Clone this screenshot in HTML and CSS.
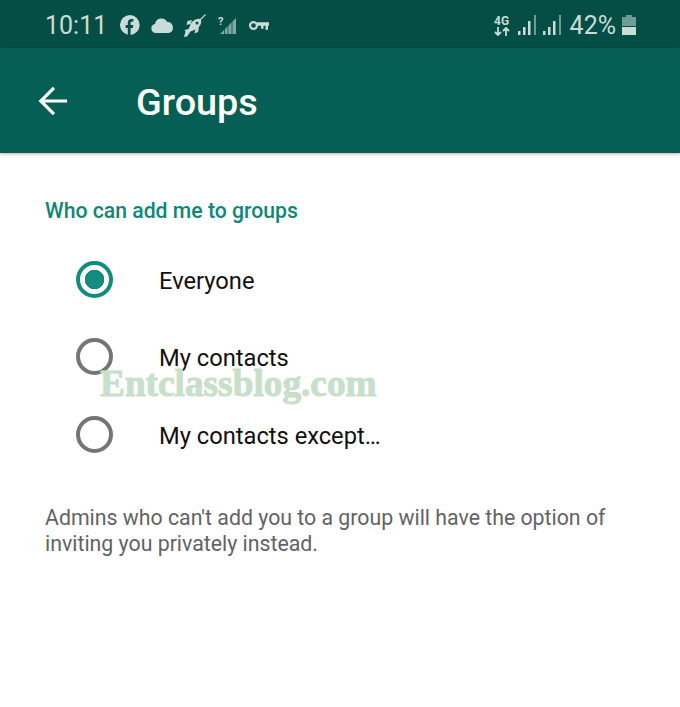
FILE: index.html
```html
<!DOCTYPE html>
<html lang="en">
<head>
<meta charset="utf-8">
<title>Groups</title>
<link rel="stylesheet" href="styles.css">
</head>
<body>
<header class="status">
  <div class="status-left">
    <span class="time">10:11</span>
    <svg class="ic ic-fb" viewBox="0 0 20 20"><path fill="#c9dcd8" fill-rule="evenodd" d="M10 0a10 10 0 0 0-2.200 19.750V13H5.600v-3h2.200V8c0-2.700 1.500-4 3.700-4 .9 0 1.900.1 1.900.1v2.500h-1.200c-1.200 0-1.600.8-1.600 1.500V10h2.700l-.45 3H10.600v6.950A10 10 0 0 0 10 0z"/></svg>
    <svg class="ic ic-cloud" viewBox="0 0 23 15"><path fill="#c9dcd8" d="M4.800 15a4.600 4.600 0 0 1-.8-9.100A6.600 6.600 0 0 1 16.300 4 5.600 5.600 0 0 1 17.800 15z"/></svg>
    <svg class="ic ic-rocket" viewBox="0 0 23 23"><ellipse cx="12.500" cy="10.500" rx="7" ry="4.200" transform="rotate(-45 12.500 10.500)" fill="#c9dcd8"/><path fill="#c9dcd8" d="M9 6 4.500 7 3.500 11 7.500 10zM16 13l-1 5-3.500 1.500 .8-4zM7 12l4 4-3.500 1.500L4 22.500 1 23l1.500-5.500L1.500 16 5.500 15z"/><path stroke="#c9dcd8" stroke-width="1.100" d="M16.500 6.500 22.500 .5"/><circle cx="14" cy="9" r="1.500" fill="#054e45"/></svg>
    <svg class="ic ic-nosig" viewBox="0 0 18 20"><path fill="#7fa8a1" d="M2 19 18 3v16z"/><path stroke="#054e45" stroke-width=".8" d="M6.500 19v-6M10 19v-10M14 19v-14"/><text class="q" x="0" y="10">?</text></svg>
    <svg class="ic ic-key" viewBox="0 0 20 11"><circle cx="4.500" cy="5.500" r="3.400" fill="none" stroke="#c9dcd8" stroke-width="2.200"/><path fill="#c9dcd8" d="M8 2.300h12v3.400h-1v4h-2.500v-4h-2v3H12v-3H8z"/></svg>
  </div>
  <div class="status-right">
    <div class="net">
      <span class="net-label">4G</span>
      <svg class="ic-arrows" viewBox="0 0 16 9"><path fill="none" stroke="#c9dcd8" stroke-width="1.800" d="M4 0v8M1 5l3 3 3-3M12 9V1M9 4l3-3 3 3"/></svg>
    </div>
    <svg class="ic ic-bars" viewBox="0 0 19 20"><path fill="#c9dcd8" d="M0 16h2.500v4H0zM5 12h2.500v8H5zM10 6h2.500v14H10z"/><path fill="#6f9c95" d="M16 0h2v20h-2z"/></svg>
    <svg class="ic ic-bars" viewBox="0 0 19 20"><path fill="#c9dcd8" d="M0 16h2.500v4H0zM5 12h2.500v8H5zM10 6h2.500v14H10z"/><path fill="#6f9c95" d="M16 0h2v20h-2z"/></svg>
    <span class="pct">42%</span>
    <svg class="ic ic-batt" viewBox="0 0 14 20"><path fill="#6f9c95" d="M4 0h6v2h4v9H0V2h4z"/><path fill="#c9dcd8" d="M0 12h14v8H0z"/></svg>
  </div>
</header>
<div class="appbar">
  <svg class="back" viewBox="0 0 32 32"><path fill="none" stroke="#fff" stroke-width="3.400" d="M31 16H4M17 2 3 16l14 14"/></svg>
  <h1 class="title">Groups</h1>
</div>
<main class="content">
  <h2 class="section">Who can add me to groups</h2>
  <ul class="options">
    <li class="option"><span class="radio radio-on"></span><span class="label">Everyone</span></li>
    <li class="option"><span class="radio"></span><span class="label">My contacts</span></li>
    <li class="option"><span class="radio"></span><span class="label">My contacts except…</span></li>
  </ul>
  <p class="note">Admins who can't add you to a group will have the option of inviting you privately instead.</p>
</main>
<div class="watermark">Entclassblog.com</div>
</body>
</html>
```
FILE: styles.css
```css
* { box-sizing: border-box; }
html, body { margin: 0; padding: 0; }
body { width: 680px; height: 707px; background: #fff; font-family: Roboto, "Liberation Sans", sans-serif; overflow: hidden; position: relative; }
.status { height: 48px; background: #054e45; display: flex; justify-content: space-between; align-items: center; padding: 2px 44px 0 45px; color: #c9dcd8; }
.status-left, .status-right { display: flex; align-items: center; }
.time { font-size: 25px; margin-right: 13px; }
.ic { display: block; flex: none; }
.ic-fb { width: 20px; height: 20px; margin-right: 11px; }
.ic-cloud { width: 23px; height: 15px; margin-right: 9px; }
.ic-rocket { width: 23px; height: 23px; margin-right: 12px; }
.ic-nosig { width: 18px; height: 20px; margin-right: 13px; }
.ic-key { width: 20px; height: 11px; }
.q { font: 700 11px Roboto, sans-serif; fill: #c9dcd8; }
.net { display: flex; flex-direction: column; align-items: center; width: 16px; margin-right: 8px; }
.net-label { font-size: 12px; font-weight: 700; line-height: 12px; }
.ic-arrows { width: 16px; height: 9px; display: block; }
.ic-bars { width: 19px; height: 20px; margin-right: 6px; }
.pct { font-size: 25px; margin: 0 6px 0 2px; }
.ic-batt { width: 14px; height: 20px; }
.appbar { height: 105px; background: #065f54; display: flex; align-items: center; padding: 2px 0 0 38px; box-shadow: 0 1px 3px rgba(0,0,0,.3); position: relative; }
.back { width: 30px; height: 30px; margin: -2px 68px 0 0; }
.title { margin: 0; color: #fff; font-size: 37.800px; font-weight: 500; }
.content { padding: 45px 45px 0; }
.section { margin: 0; color: #0f8778; font-size: 21.200px; font-weight: 500; line-height: 26px; }
.options { list-style: none; margin: 16.400px 0 0; padding: 0 0 0 31px; }
.option { display: flex; align-items: center; height: 77.500px; font-size: 23.700px; color: #111; }
.label { padding-top: 3px; }
.radio { width: 37px; height: 37px; border-radius: 50%; border: 4px solid #757575; margin-right: 46px; flex: none; }
.radio-on { border-color: #128c7e; background: radial-gradient(circle, #128c7e 0 9.500px, transparent 10px); }
.note { margin: 32.600px 0 0; color: #5f6368; font-size: 21.300px; line-height: 25.500px; }
.watermark { position: absolute; left: 100px; top: 362px; font: 700 37.300px "Liberation Serif", serif; color: #c8dfc9; white-space: nowrap; -webkit-text-stroke: 1px #c8dfc9; }
```
